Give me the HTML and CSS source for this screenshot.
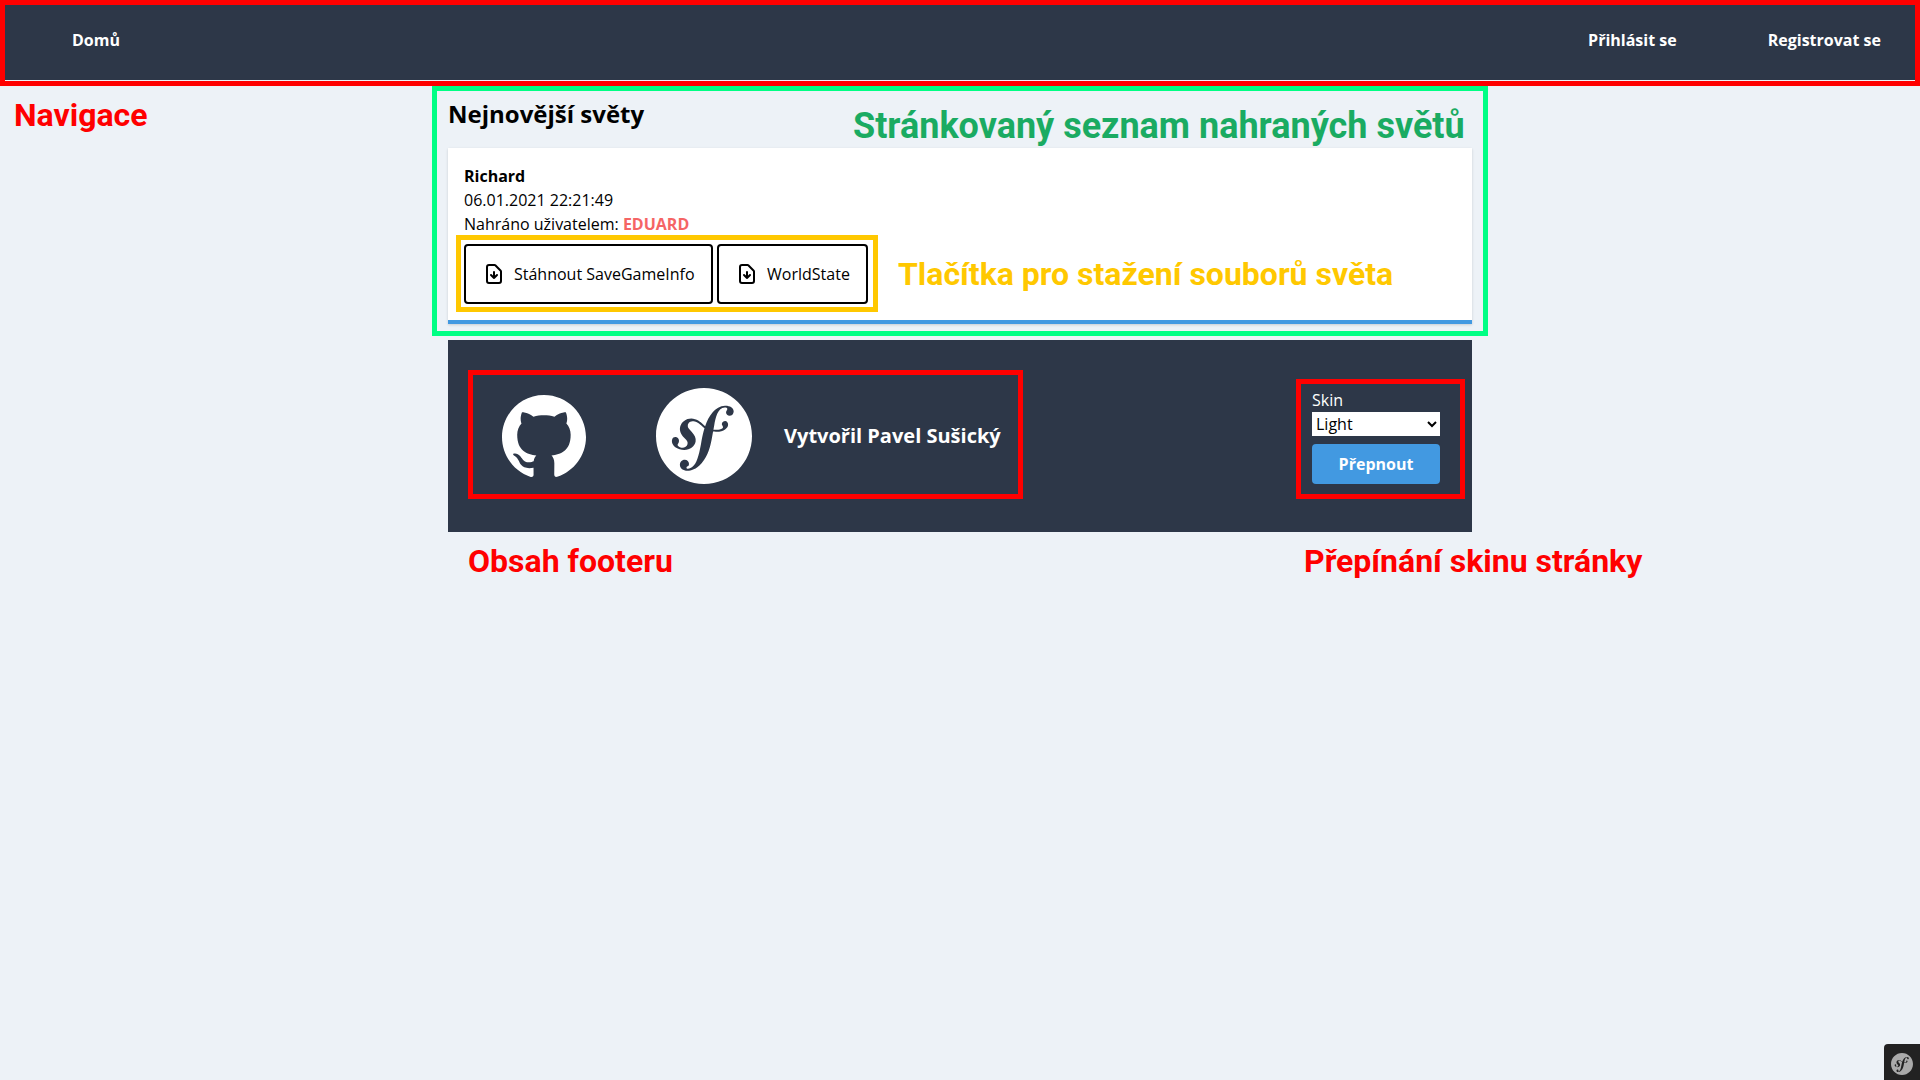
FILE: index.html
```html
<!DOCTYPE html>
<html lang="cs">
<head>
<meta charset="utf-8">
<title>Nejnovější světy</title>
<link rel="stylesheet" href="styles.css">
</head>
<body>
<svg class="defs" aria-hidden="true">
  <symbol id="download" viewBox="0 0 24 24"><path fill="none" stroke="currentColor" stroke-width="2" stroke-linecap="round" stroke-linejoin="round" d="M12 10v6m0 0l-3-3m3 3l3-3m2 8H7a2 2 0 01-2-2V5a2 2 0 012-2h5.586a1 1 0 01.707.293l5.414 5.414a1 1 0 01.293.707V19a2 2 0 01-2 2z"/></symbol>
  <symbol id="github" viewBox="0 0 24 24"><path fill="currentColor" d="M12 .297c-6.63 0-12 5.373-12 12 0 5.303 3.438 9.8 8.205 11.385.6.113.82-.258.82-.577 0-.285-.01-1.04-.015-2.04-3.338.724-4.042-1.61-4.042-1.61C4.422 18.07 3.633 17.7 3.633 17.7c-1.087-.744.084-.729.084-.729 1.205.084 1.838 1.236 1.838 1.236 1.07 1.835 2.809 1.305 3.495.998.108-.776.417-1.305.76-1.605-2.665-.3-5.466-1.332-5.466-5.93 0-1.31.465-2.38 1.235-3.22-.135-.303-.54-1.523.105-3.176 0 0 1.005-.322 3.3 1.23.96-.267 1.98-.399 3-.405 1.02.006 2.04.138 3 .405 2.28-1.552 3.285-1.23 3.285-1.23.645 1.653.24 2.873.12 3.176.765.84 1.23 1.91 1.23 3.22 0 4.61-2.805 5.625-5.475 5.92.42.36.81 1.096.81 2.22 0 1.606-.015 2.896-.015 3.286 0 .315.21.69.825.57C20.565 22.092 24 17.592 24 12.297c0-6.627-5.373-12-12-12"/></symbol>
  <symbol id="symfony" viewBox="0 0 24 24"><path fill="currentColor" d="M24 12c0 6.628-5.372 12-12 12S0 18.628 0 12 5.372 0 12 0s12 5.372 12 12zm-6.753-7.561c-1.22.042-2.283.715-3.075 1.644-.878 1.02-1.461 2.229-1.881 3.461-.753-.614-1.332-1.411-2.539-1.758-.932-.268-1.911-.158-2.813.514-.428.319-.722.801-.862 1.257-.362 1.177.381 2.225.719 2.6l.737.79c.152.154.519.56.339 1.138-.193.631-.951 1.037-1.732.799-.348-.106-.848-.366-.734-.73.045-.15.152-.263.21-.391.052-.11.077-.194.095-.242.141-.465-.053-1.07-.551-1.223-.465-.143-.939-.03-1.125.566-.209.68.117 1.913 1.86 2.449 2.04.628 3.765-.484 4.009-1.932.153-.907-.255-1.582-1.006-2.447l-.612-.677c-.371-.37-.497-1.002-.114-1.485.324-.409.785-.584 1.539-.379 1.103.3 1.594 1.063 2.412 1.68-.338 1.11-.56 2.223-.759 3.222l-.123.746c-.585 3.07-1.033 4.757-2.194 5.726-.234.166-.57.416-1.073.434-.266.005-.352-.176-.355-.257-.006-.184.15-.271.255-.353.154-.083.39-.224.372-.674-.016-.532-.456-.994-1.094-.973-.477.017-1.203.465-1.176 1.286.028.85.819 1.485 2.012 1.444.638-.021 2.062-.281 3.464-1.949 1.633-1.911 2.09-4.101 2.434-5.706l.383-2.116c.213.024.441.042.69.048 2.032.044 3.049-1.01 3.064-1.776.01-.464-.304-.921-.744-.91-.386.009-.718.278-.806.654-.094.428.646.813.068 1.189-.41.266-1.146.452-2.184.3l.188-1.042c.386-1.976.861-4.407 2.661-4.467.132-.007.612.006.623.323.003.105-.022.134-.147.375-.115.155-.174.345-.168.537.017.504.4.836.957.816.743-.023.955-.748.945-1.119-.032-.874-.952-1.424-2.17-1.386z"/></symbol>
</svg>

<nav class="nav">
  <a class="nav-link" href="#">Domů</a>
  <div class="nav-right">
    <a class="nav-link" href="#">Přihlásit se</a>
    <a class="nav-link" href="#">Registrovat se</a>
  </div>
</nav>

<main class="container">
  <h1 class="title">Nejnovější světy</h1>
  <article class="card">
    <h2 class="world-name">Richard</h2>
    <p>06.01.2021 22:21:49</p>
    <p>Nahráno uživatelem: <span class="author">EDUARD</span></p>
    <div class="buttons">
      <a class="file-button" href="#"><svg class="file-icon"><use href="#download"/></svg>Stáhnout SaveGameInfo</a>
      <a class="file-button" href="#"><svg class="file-icon"><use href="#download"/></svg>WorldState</a>
    </div>
  </article>
  <footer class="footer">
    <div class="credits">
      <svg class="github-logo"><use href="#github"/></svg>
      <svg class="symfony-logo"><use href="#symfony"/></svg>
      <span class="credit-text">Vytvořil Pavel Sušický</span>
    </div>
    <form class="skin">
      <label for="skin">Skin</label>
      <select class="skin-select" id="skin"><option>Light</option></select>
      <button class="skin-button" type="button">Přepnout</button>
    </form>
  </footer>
</main>

<div class="frame frame-nav"></div>
<div class="frame frame-list"></div>
<div class="frame frame-buttons"></div>
<div class="frame frame-credits"></div>
<div class="frame frame-skin"></div>
<div class="note note-nav">Navigace</div>
<div class="note note-list">Stránkovaný seznam nahraných světů</div>
<div class="note note-buttons">Tlačítka pro stažení souborů světa</div>
<div class="note note-credits">Obsah footeru</div>
<div class="note note-skin">Přepínání skinu stránky</div>

<div class="toolbar"><svg class="toolbar-logo"><use href="#symfony"/></svg></div>
</body>
</html>
```

FILE: styles.css
```css
*, *::before, *::after { box-sizing: border-box; }
body {
  margin: 0;
  min-height: 100vh;
  position: relative;
  overflow: hidden;
  background: #edf2f7;
  color: #000;
  font: 16px/24px "Open Sans", sans-serif;
}
h1, h2, p { margin: 0; }
a { color: inherit; text-decoration: none; }
svg { display: block; flex: none; }
.defs { position: absolute; width: 0; height: 0; }

.nav {
  height: 80px;
  padding: 0 39px 0 72px;
  display: flex;
  align-items: center;
  justify-content: space-between;
  background: #2d3748;
  color: #fff;
}
.nav-link { font-weight: 700; }
.nav-right { display: flex; gap: 91px; }

.container { width: 1024px; margin: 0 auto; }
.title { padding: 16px 0; font-size: 24px; line-height: 36px; font-weight: 700; }
.card {
  padding: 16px;
  background: #fff;
  border-bottom: 4px solid #4299e1;
  box-shadow: 0 1px 3px rgba(0, 0, 0, .1), 0 1px 2px rgba(0, 0, 0, .06);
}
.world-name { font-size: 16px; font-weight: 700; }
.author { color: #f56565; font-weight: 700; }
.buttons { display: flex; gap: 4.5px; margin-top: 8px; }
.file-button {
  display: flex;
  align-items: center;
  gap: 8px;
  padding: 16px;
  border: 2px solid #000;
  border-radius: 4px;
}
.file-icon { width: 24px; height: 24px; }

.footer {
  height: 192px;
  margin-top: 16px;
  padding: 0 32px 0 54px;
  display: flex;
  align-items: center;
  justify-content: space-between;
  background: #2d3748;
  color: #fff;
}
.credits { display: flex; align-items: center; }
.github-logo { width: 84px; height: 84px; margin-right: 70px; }
.symfony-logo { width: 96px; height: 96px; margin-right: 32px; }
.credit-text { font-size: 20px; line-height: 30px; font-weight: 700; }
.skin { width: 128px; display: flex; flex-direction: column; }
.skin-select {
  height: 24px;
  margin-bottom: 8px;
  padding: 0;
  border: 0;
  border-radius: 0;
  background: #fff;
  color: #000;
  font: inherit;
}
.skin-button {
  height: 40px;
  padding: 0;
  border: 0;
  border-radius: 4px;
  background: #4299e1;
  color: #fff;
  font: inherit;
  font-weight: 700;
}

/* Annotation layer */
.frame { position: absolute; border: 5px solid #f00; pointer-events: none; }
.frame-nav { left: 0; top: 0; width: 1920px; height: 86px; }
.frame-list { left: 432px; top: 86px; width: 1056px; height: 250px; border-color: #00ff84; }
.frame-buttons { left: 456px; top: 235px; width: 422px; height: 77px; border-color: #ffc800; }
.frame-credits { left: 468px; top: 370px; width: 555px; height: 129px; }
.frame-skin { left: 1296px; top: 379px; width: 169px; height: 120px; }
.note {
  position: absolute;
  color: #f00;
  font: 700 32px/40px Roboto, sans-serif;
  white-space: nowrap;
}
.note-nav { left: 14px; top: 95px; }
.note-list { left: 853px; top: 106px; font-size: 36px; color: #1aab62; }
.note-buttons { left: 898px; top: 254px; color: #ffc800; }
.note-credits { left: 468px; top: 541px; }
.note-skin { left: 1304px; top: 541px; }

.toolbar {
  position: absolute;
  right: 0;
  bottom: 0;
  width: 36px;
  height: 36px;
  padding: 9px 7px;
  border-top-left-radius: 4px;
  background: #222;
  color: #aaa;
}
.toolbar-logo { width: 22px; height: 22px; }
```
